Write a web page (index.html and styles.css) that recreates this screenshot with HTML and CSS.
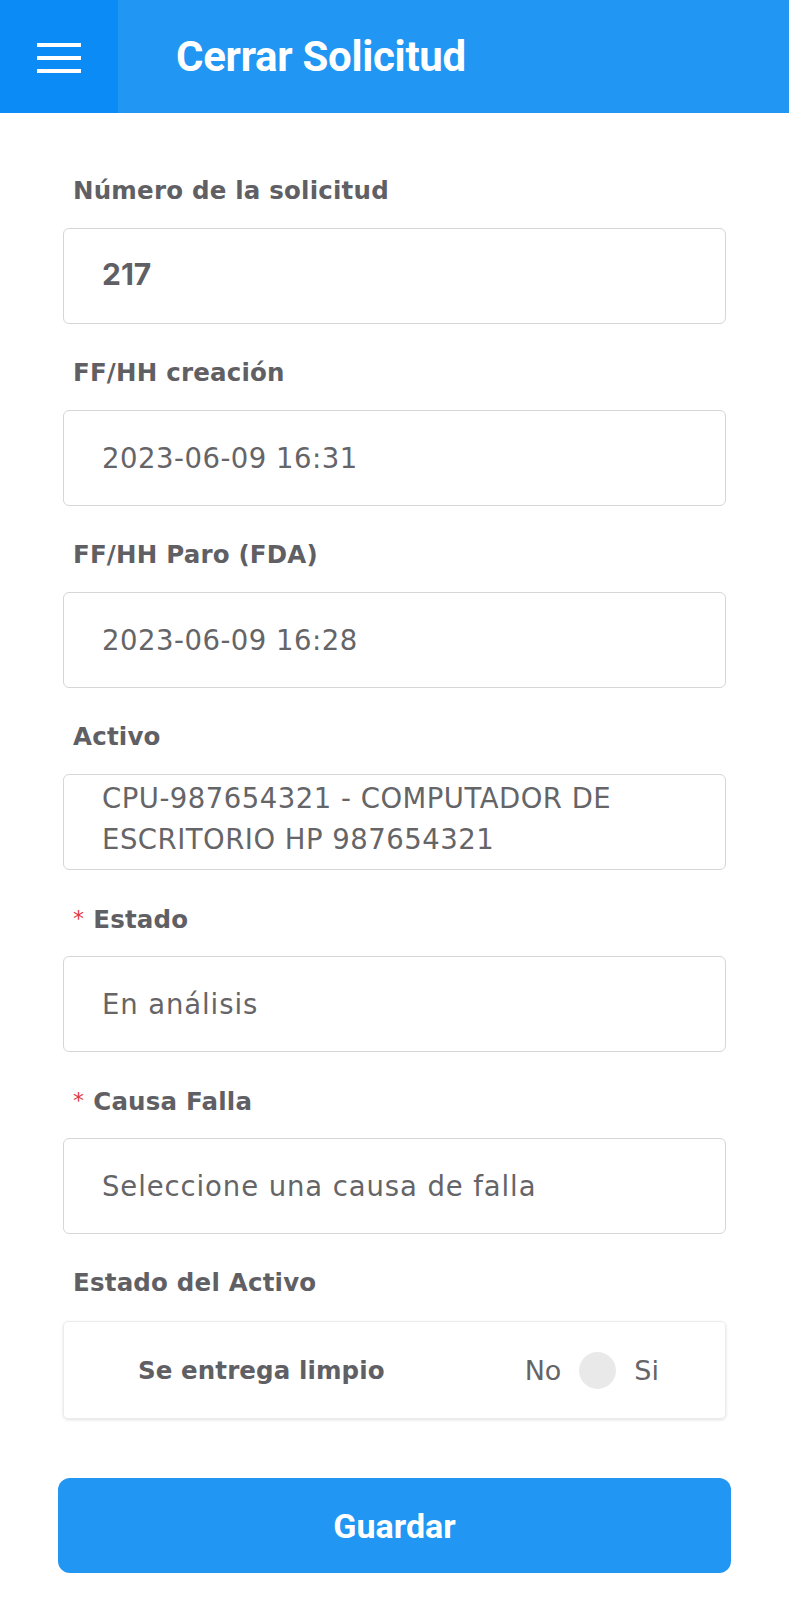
FILE: index.html
```html
<!DOCTYPE html>
<html lang="es">
<head>
<meta charset="utf-8">
<title>Cerrar Solicitud</title>
<link rel="stylesheet" href="styles.css">
</head>
<body>
<header class="topbar">
  <div class="menu-btn">
    <svg width="44" height="32" viewBox="0 0 44 32" aria-hidden="true">
      <rect x="0" y="2" width="44" height="4" fill="#fff"/>
      <rect x="0" y="15" width="44" height="4" fill="#fff"/>
      <rect x="0" y="28" width="44" height="4" fill="#fff"/>
    </svg>
  </div>
  <h1 class="title">Cerrar Solicitud</h1>
</header>
<main class="form">
  <div class="field">
    <label class="label">Número de la solicitud</label>
    <div class="box bold">217</div>
  </div>
  <div class="field">
    <label class="label">FF/HH creación</label>
    <div class="box">2023-06-09 16:31</div>
  </div>
  <div class="field">
    <label class="label">FF/HH Paro (FDA)</label>
    <div class="box">2023-06-09 16:28</div>
  </div>
  <div class="field">
    <label class="label">Activo</label>
    <div class="box multi">CPU-987654321 - COMPUTADOR DE ESCRITORIO HP 987654321</div>
  </div>
  <div class="field">
    <label class="label"><span class="req">*</span>Estado</label>
    <div class="box text">En análisis</div>
  </div>
  <div class="field">
    <label class="label"><span class="req">*</span>Causa Falla</label>
    <div class="box text">Seleccione una causa de falla</div>
  </div>
  <div class="field">
    <label class="label">Estado del Activo</label>
    <div class="card">
      <span class="card-label">Se entrega limpio</span>
      <div class="toggle-group">
        <span class="opt">No</span>
        <span class="knob"></span>
        <span class="opt">Si</span>
      </div>
    </div>
  </div>
  <button class="save">Guardar</button>
</main>
</body>
</html>
```
FILE: styles.css
```css
* { box-sizing: border-box; }
html, body { margin: 0; padding: 0; background: #fff; }
body { font-family: "DejaVu Sans", "Inter", sans-serif; color: #555; }

.topbar {
  display: flex;
  align-items: center;
  height: 113px;
  background: #2196f3;
}
.menu-btn {
  width: 118px;
  height: 113px;
  background: #0a8bf5;
  display: flex;
  align-items: center;
  justify-content: center;
}
.title {
  margin: 0 0 0 58px;
  font-family: "Roboto", sans-serif;
  font-weight: 700;
  font-size: 42px;
  color: #fff;
  letter-spacing: -0.3px;
}

.form {
  padding: 60px 63px 20px;
  display: flex;
  flex-direction: column;
}
.field { display: flex; flex-direction: column; margin-bottom: 31px; }
.label {
  height: 36px;
  line-height: 36px;
  padding-left: 10px;
  margin-bottom: 19px;
  font-size: 24.5px;
  font-weight: 700;
  letter-spacing: 0.2px;
  color: #606064;
}
.req {
  color: #e0393e;
  font-size: 22px;
  font-weight: 400;
  margin-right: 9px;
  vertical-align: 2px;
}
.box {
  height: 96px;
  border: 1px solid #d6d6d6;
  border-radius: 6px;
  padding: 0 20px 0 38px;
  display: flex;
  align-items: center;
  font-size: 27.5px;
  letter-spacing: 0.5px;
  font-weight: 400;
  color: #656568;
}
.box.text { letter-spacing: 0.9px; }
.box.bold {
  font-family: "Inter", "DejaVu Sans", sans-serif;
  font-weight: 700;
  font-size: 30px;
  letter-spacing: 0;
  color: #606064;
  padding-bottom: 5px;
}
.box.multi {
  align-items: flex-start;
  padding-top: 3px;
  line-height: 41px;
}

.card {
  margin-top: 1px;
  height: 98px;
  border: 1px solid #ececec;
  border-radius: 5px;
  box-shadow: 0 1px 3px rgba(0,0,0,0.12);
  display: flex;
  align-items: center;
  justify-content: space-between;
  padding: 0 66px 0 74px;
}
.card-label { font-size: 24.5px; font-weight: 700; letter-spacing: 0.1px; color: #606064; }
.toggle-group { display: flex; align-items: center; }
.opt { font-size: 27px; color: #656568; }
.knob {
  width: 37px;
  height: 37px;
  border-radius: 50%;
  background: #e9e9e9;
  margin: 0 18px;
}

.save {
  margin: 28px -5px 0;
  height: 95px;
  border: none;
  border-radius: 12px;
  background: #2196f3;
  color: #fff;
  font-family: "Roboto", sans-serif;
  font-weight: 700;
  font-size: 34px;
}
```
